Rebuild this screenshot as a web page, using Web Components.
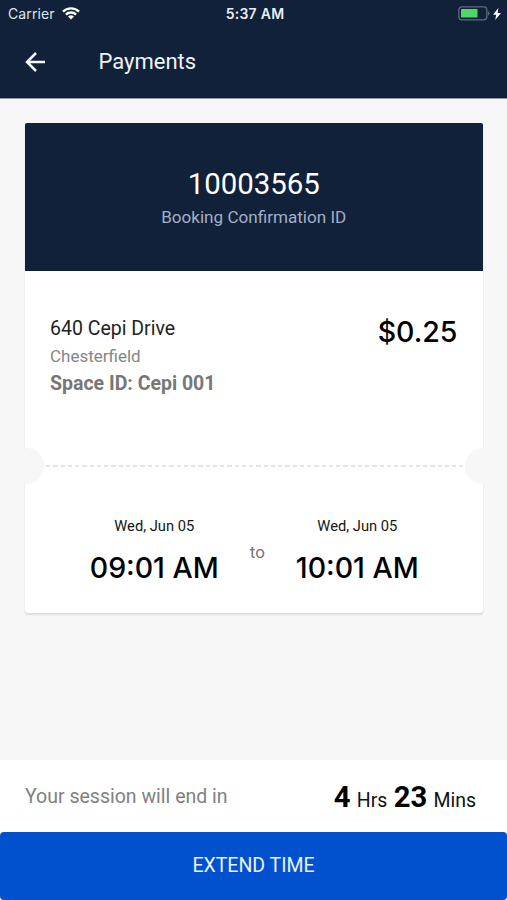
<!DOCTYPE html>
<html lang="en">
<head>
<meta charset="utf-8">
<title>Payments</title>
<style>
  body {
    margin: 0;
    font-family: Roboto, sans-serif;
    background: #f7f7f7;
  }
</style>
</head>
<body>
<payments-page></payments-page>

<script>
class StatusBar extends HTMLElement {
  constructor() {
    super();
    this.attachShadow({ mode: 'open' });
    this.shadowRoot.innerHTML = `
      <style>
        :host {
          display: grid;
          grid-template-columns: 1fr auto 1fr;
          align-items: center;
          height: 27px;
          padding: 0 6px 0 8px;
          font: 14px/27px Inter, sans-serif;
          color: #dfe6ef;
        }
        .left, .right {
          display: flex;
          align-items: center;
        }
        .left {
          gap: 7px;
          letter-spacing: 0.1px;
        }
        .right {
          justify-content: flex-end;
          gap: 3px;
        }
        .time {
          padding-left: 1px;
          font-weight: 600;
          font-size: 14px;
          letter-spacing: 0.25px;
          color: #e9eef4;
        }
        svg {
          display: block;
        }
      </style>
      <div class="left">
        <span>Carrier</span>
        <svg width="18" height="13" viewBox="0 0 18 13" fill="none" stroke="#fff" stroke-width="2.3">
          <path d="M1 4.6a11.4 11.4 0 0 1 16 0"/>
          <path d="M3.9 7.6a7.2 7.2 0 0 1 10.2 0"/>
          <path d="M9 12.6L6 9.6a4.3 4.3 0 0 1 6 0z" fill="#fff" stroke="none"/>
        </svg>
      </div>
      <span class="time"><slot></slot></span>
      <div class="right">
        <svg width="32" height="15" viewBox="0 0 32 15">
          <rect x="0.8" y="0.8" width="28" height="13" rx="3" fill="none" stroke="#5f6b7d" stroke-width="1.3"/>
          <rect x="3" y="3" width="16.5" height="8.6" rx="0.8" fill="#4cd964"/>
          <path d="M30 5.2a2.4 2.4 0 0 1 0 4.4z" fill="#5f6b7d"/>
        </svg>
        <svg width="8" height="12" viewBox="0 0 8 12" fill="#fff">
          <path d="M5.4 0L0 6.8H3.2L2.2 12L8 5H4.6z"/>
        </svg>
      </div>
    `;
  }
}
customElements.define('status-bar', StatusBar);

class AppBar extends HTMLElement {
  constructor() {
    super();
    this.attachShadow({ mode: 'open' });
    this.shadowRoot.innerHTML = `
      <style>
        :host {
          display: flex;
          align-items: center;
          height: 70px;
          padding-left: 25px;
          color: #eef3f8;
        }
        svg {
          display: block;
        }
        h1 {
          margin: 0 0 0 52.5px;
          font-size: 22px;
          line-height: 26px;
          font-weight: 400;
        }
      </style>
      <svg width="21" height="20" viewBox="0 0 21 20" fill="none" stroke="#f4f7fa" stroke-width="2.5">
        <path d="M20 10H2.5M11 1L2 10l9 9"/>
      </svg>
      <h1><slot></slot></h1>
    `;
  }
}
customElements.define('app-bar', AppBar);

class TimeStop extends HTMLElement {
  constructor() {
    super();
    this.attachShadow({ mode: 'open' });
    this.shadowRoot.innerHTML = `
      <style>
        :host {
          display: block;
          text-align: center;
          white-space: nowrap;
          color: #000;
        }
        .date {
          font-size: 14.7px;
          line-height: 20px;
          color: #151515;
        }
        .time {
          margin-top: 14px;
          font: 500 28.5px/36px Inter, sans-serif;
        }
      </style>
      <div class="date"><slot name="date"></slot></div>
      <div class="time"><slot></slot></div>
    `;
  }
}
customElements.define('time-stop', TimeStop);

class BookingTicket extends HTMLElement {
  constructor() {
    super();
    this.attachShadow({ mode: 'open' });
    this.shadowRoot.innerHTML = `
      <style>
        :host {
          display: block;
          height: 490px;
          border-radius: 3px;
          background: #fff;
          box-shadow: 0 2px 2px rgba(0, 0, 0, 0.1), 0 0 1px rgba(0, 0, 0, 0.1);
        }
        header {
          box-sizing: border-box;
          height: 147.5px;
          padding-top: 43px;
          border-radius: 2px 2px 0 0;
          background: #11213a;
          text-align: center;
        }
        .id {
          font-size: 29.4px;
          line-height: 36px;
          color: #fff;
        }
        .label {
          margin-top: 4px;
          font-size: 17.1px;
          line-height: 22px;
          color: #a3afc5;
        }
        .place {
          display: flex;
          justify-content: space-between;
          box-sizing: border-box;
          height: 177.5px;
          padding: 44.5px 25px 0;
        }
        .street {
          font-size: 19.5px;
          line-height: 28px;
          color: #222;
        }
        .city {
          font-size: 17px;
          line-height: 26px;
          color: #858585;
        }
        .space {
          font-size: 19.5px;
          line-height: 29px;
          font-weight: 700;
          color: #777;
        }
        .price {
          margin-top: -1px;
          font: 500 28.5px/36px Inter, sans-serif;
          color: #000;
        }
        .tear {
          display: flex;
          align-items: center;
          justify-content: space-between;
          height: 36px;
          margin: 0 -18px 0 -17px;
        }
        .notch {
          width: 36px;
          height: 36px;
          border-radius: 50%;
          background: #f7f7f7;
        }
        .dashes {
          flex: 1;
          height: 1.5px;
          margin: 0 2px;
          background: repeating-linear-gradient(90deg, #e4e4e4 0 4.3px, transparent 4.3px 7.25px);
        }
        .times {
          display: flex;
          justify-content: center;
          padding: 32px 0 0 1px;
        }
        .to {
          margin: 26px 31px 0;
          font-size: 17px;
          line-height: 20px;
          color: #777;
        }
      </style>
      <header>
        <div class="id"><slot name="id"></slot></div>
        <div class="label">Booking Confirmation ID</div>
      </header>
      <section class="place">
        <div>
          <div class="street"><slot name="street"></slot></div>
          <div class="city"><slot name="city"></slot></div>
          <div class="space"><slot name="space"></slot></div>
        </div>
        <div class="price"><slot name="price"></slot></div>
      </section>
      <div class="tear">
        <div class="notch"></div>
        <div class="dashes"></div>
        <div class="notch"></div>
      </div>
      <section class="times">
        <slot name="start"></slot>
        <div class="to">to</div>
        <slot name="end"></slot>
      </section>
    `;
  }
}
customElements.define('booking-ticket', BookingTicket);

class SessionTimer extends HTMLElement {
  constructor() {
    super();
    this.attachShadow({ mode: 'open' });
    this.shadowRoot.innerHTML = `
      <style>
        :host {
          display: flex;
          justify-content: space-between;
          box-sizing: border-box;
          height: 72px;
          padding: 0 31px 0 25px;
          background: #fff;
          white-space: nowrap;
        }
        .label {
          font-size: 19.5px;
          line-height: 73px;
          color: #808080;
        }
        .left {
          font-size: 19.5px;
          line-height: 75px;
          word-spacing: 1.4px;
          color: #111;
        }
        b {
          font-size: 29.2px;
          color: #000;
        }
      </style>
      <span class="label"><slot></slot></span>
      <span class="left"><b>${this.getAttribute('hours')}</b> Hrs <b>${this.getAttribute('minutes')}</b> Mins</span>
    `;
  }
}
customElements.define('session-timer', SessionTimer);

class ActionButton extends HTMLElement {
  constructor() {
    super();
    this.attachShadow({ mode: 'open' });
    this.shadowRoot.innerHTML = `
      <style>
        :host {
          display: block;
          background: #fff;
        }
        button {
          display: block;
          width: 100%;
          height: 68.5px;
          padding: 0;
          border: 0;
          border-radius: 4px;
          background: #0151cf;
          color: #e9f1fd;
          font: 400 19.5px/68px Roboto, sans-serif;
        }
      </style>
      <button><slot></slot></button>
    `;
  }
}
customElements.define('action-button', ActionButton);

class PaymentsPage extends HTMLElement {
  constructor() {
    super();
    this.attachShadow({ mode: 'open' });
    this.shadowRoot.innerHTML = `
      <style>
        :host {
          display: flex;
          flex-direction: column;
          height: 900px;
          overflow: hidden;
        }
        .top {
          box-sizing: border-box;
          height: 99px;
          background: #11213a;
          border-bottom: 1px solid #8e97a4;
        }
        main {
          flex: 1;
          padding: 24px 24.5px 0 25px;
        }
      </style>
      <div class="top">
        <status-bar>5:37 AM</status-bar>
        <app-bar>Payments</app-bar>
      </div>
      <main>
        <booking-ticket>
          <span slot="id">10003565</span>
          <span slot="street">640 Cepi Drive</span>
          <span slot="city">Chesterfield</span>
          <span slot="space">Space ID: Cepi 001</span>
          <span slot="price">$0.25</span>
          <time-stop slot="start"><span slot="date">Wed, Jun 05</span>09:01 AM</time-stop>
          <time-stop slot="end"><span slot="date">Wed, Jun 05</span>10:01 AM</time-stop>
        </booking-ticket>
      </main>
      <session-timer hours="4" minutes="23">Your session will end in</session-timer>
      <action-button>EXTEND TIME</action-button>
    `;
  }
}
customElements.define('payments-page', PaymentsPage);
</script>
</body>
</html>
